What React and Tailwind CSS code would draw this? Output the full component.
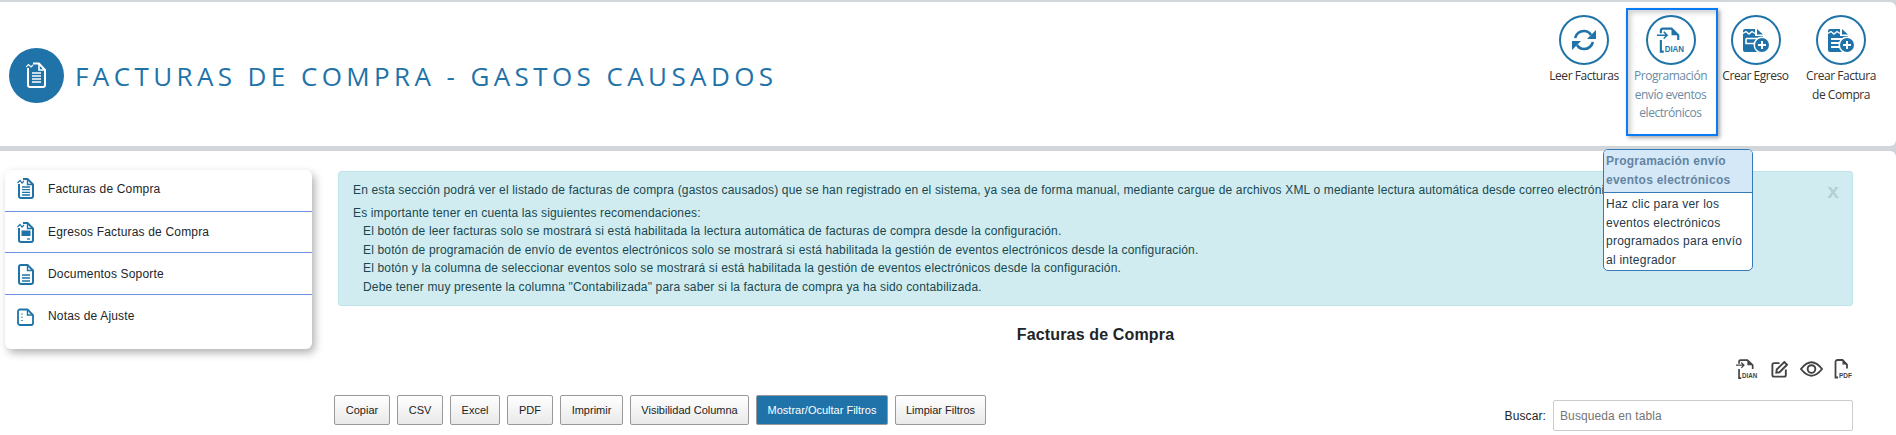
const BLUE = "#1f73a8";
const RefreshIcon = () => (
  <svg width="24" height="22" viewBox="0 0 24 22" fill="none">
    <path d="M3 9 C4.5 4.5 8 2 12 2 C15 2 17.5 3.5 19 6" stroke={BLUE} strokeWidth="2.6" />
    <path d="M24 1 V10 H15 Z" fill={BLUE} />
    <path d="M21 13 C19.5 17.5 16 20 12 20 C9 20 6.5 18.5 5 16" stroke={BLUE} strokeWidth="2.6" />
    <path d="M0 21 V12 H9 Z" fill={BLUE} />
  </svg>
);
const DianIcon = ({ color = BLUE, w = 28, h = 26 }) => (
  <svg width={w} height={h} viewBox="0 0 29 26" fill="none" className="overflow-visible">
    <path d="M4 6 V3 A2 2 0 0 1 6 1.2 H15 L22 8 V13" stroke={color} strokeWidth="2.2" />
    <path d="M15 1 L22 8 H15 Z" fill={color} />
    <path d="M0 8 H10 M7 4.5 L10.5 8 L7 11.5" stroke={color} strokeWidth="1.6" />
    <path d="M4 13 V25 H7" stroke={color} strokeWidth="2.2" />
    <text x="8" y="25" fontFamily="Liberation Sans, sans-serif" fontWeight="700" fontSize="10" fill={color} textLength="20" lengthAdjust="spacingAndGlyphs">DIAN</text>
  </svg>
);
const PdfIcon = () => (
  <svg width="19" height="20" viewBox="0 0 19 20" fill="none" className="overflow-visible">
    <path d="M1.5 11 V3 A2 2 0 0 1 3.5 1 H8.5 L13 5.5 V9.5" stroke="#444" strokeWidth="1.8" />
    <path d="M8.5 1 L13 5.5 H8.5 Z" fill="#444" />
    <path d="M1.5 11 V18.5 H4" stroke="#444" strokeWidth="1.8" />
    <text x="5" y="19" fontSize="7.5" fontWeight="700" fill="#444" fontFamily="Liberation Sans, sans-serif" textLength="13" lengthAdjust="spacingAndGlyphs">PDF</text>
  </svg>
);
const DocPlus = ({ lines }) => (
  <svg width="28" height="25" viewBox="0 0 28 25" fill="none">
    <path d="M1 3 A2 2 0 0 1 3 1 H13 V8 H21 V24 H3 A2 2 0 0 1 1 22 Z" fill={BLUE} />
    <path d="M15 1 L21 6.5 H15 Z" fill={BLUE} />
    <path d="M0 6 L4 3.5 L7 6 L10 3.5 L13 5.5" stroke="#fff" strokeWidth="1.4" />
    {lines ? (
      <path d="M4 11 H17 M4 15 H14 M4 19 H13" stroke="#fff" strokeWidth="1.8" />
    ) : (
      <path d="M4 10.5 H17 V11 M4 10.5 V15.5 H13" stroke="#fff" strokeWidth="1.6" />
    )}
    <circle cx="20" cy="17" r="8.5" fill="#fff" />
    <circle cx="20" cy="17" r="7" fill={BLUE} />
    <path d="M20 13 V21 M16 17 H24" stroke="#fff" strokeWidth="2" />
  </svg>
);
const HeaderAction = ({ icon, lines, active, width }) => (
  <div className={`flex flex-col items-center shrink-0 ${width} ${active ? "h-[128px] border-2 border-[#087bf5] shadow-[2px_2px_4px_rgba(0,0,0,0.35),inset_3px_3px_5px_rgba(0,0,0,0.18)] pt-[5px] pr-[3px] text-[#6b8ba3]" : "pt-[7px] text-[#333]"}`}>
    <div className="w-[50px] h-[50px] rounded-full border-[2.5px] border-[#1f73a8] bg-white flex items-center justify-center">{icon}</div>
    <div className="mt-[2px] text-center text-[12px] leading-[18.5px] font-['Open_Sans',sans-serif] tracking-[-0.45px]">
      {lines.map((l) => <div key={l} className="whitespace-nowrap">{l}</div>)}
    </div>
  </div>
);
const TitleDoc = () => (
  <svg width="21" height="26" viewBox="0 0 21 26" fill="none">
    <path d="M2 6 V23 A2 2 0 0 0 4 25 H17 A2 2 0 0 0 19 23 V8 L13 1.5 H7" stroke="#fff" strokeWidth="2" />
    <path d="M13 1.5 V8 H19" stroke="#fff" strokeWidth="1.6" />
    <path d="M0 5 L2.5 2.5 L5 5 L7 3" stroke="#fff" strokeWidth="1.2" />
    <path d="M6 11 H15 M6 14 H15 M6 17 H15 M6 20 H15" stroke="#fff" strokeWidth="1.5" />
  </svg>
);
const SideIcon = ({ kind }) => (
  <svg width="17" height="21" viewBox="0 0 17 21" fill="none">
    {kind === "nota" ? (
      <>
        <path d="M1 4.5 A2 2 0 0 1 3 2.5 H10.5 L16 8 V16 A2 2 0 0 1 14 18 H3 A2 2 0 0 1 1 16 Z" stroke={BLUE} strokeWidth="1.8" />
        <path d="M10.5 2.5 V8 H16" stroke={BLUE} strokeWidth="1.4" />
        <path d="M5 6.5 V7.5 M5 9.8 V10.8 M5 13 V14" stroke={BLUE} strokeWidth="1.5" />
      </>
    ) : (
      <>
        <path d={kind === "doc" ? "M2 3 A2 2 0 0 1 4 1 H10.5 L16 6.5 V18 A2 2 0 0 1 14 20 H4 A2 2 0 0 1 2 18 Z" : "M2 6 V18 A2 2 0 0 0 4 20 H14 A2 2 0 0 0 16 18 V6.5 L10.5 1 H6"} stroke={BLUE} strokeWidth="2" />
        <path d="M10.5 1 V6.5 H16" stroke={BLUE} strokeWidth="1.4" />
        {kind !== "doc" && <path d="M0.5 5 L3 2.5 L5 5 L7 3" stroke={BLUE} strokeWidth="1.2" />}
        {kind === "fact" && <path d="M5 9 H13 M5 11.7 H13 M5 14.4 H13 M5 17 H13" stroke={BLUE} strokeWidth="1.3" />}
        {kind === "egr" && <><rect x="4.5" y="8.5" width="9" height="5.5" fill={BLUE} /><path d="M10 17 H13" stroke={BLUE} strokeWidth="1.3" /></>}
        {kind === "doc" && <path d="M5 11 H13 M5 14 H13 M5 17 H13" stroke={BLUE} strokeWidth="1.4" />}
      </>
    )}
  </svg>
);
const menu = [
  ["fact", "Facturas de Compra", "pt-[8px]", "pt-[11px]", "h-[42px]"],
  ["egr", "Egresos Facturas de Compra", "pt-[10px]", "pt-[12px]", "h-[41px]"],
  ["doc", "Documentos Soporte", "pt-[11px]", "pt-[13px]", "h-[42px]"],
  ["nota", "Notas de Ajuste", "pt-[12px]", "pt-[13px]", ""],
];
const buttons = [
  ["Copiar", "w-[56px]"], ["CSV", "w-[46px]"], ["Excel", "w-[50px]"], ["PDF", "w-[46px]"],
  ["Imprimir", "w-[63px]"], ["Visibilidad Columna", "w-[119px]"], ["Mostrar/Ocultar Filtros", "w-[132px]"], ["Limpiar Filtros", "w-[91px]"],
];
const rules = [
  "El botón de leer facturas solo se mostrará si está habilitada la lectura automática de facturas de compra desde la configuración.",
  "El botón de programación de envío de eventos electrónicos solo se mostrará si está habilitada la gestión de eventos electrónicos desde la configuración.",
  "El botón y la columna de seleccionar eventos solo se mostrará si está habilitada la gestión de eventos electrónicos desde la configuración.",
  "Debe tener muy presente la columna \"Contabilizada\" para saber si la factura de compra ya ha sido contabilizada.",
];
export default function App() {
  return (
    <div className="w-[1896px] h-[435px] overflow-hidden bg-[#d2d5d9] pt-[2px] font-['Liberation_Sans',sans-serif] text-[#212529]">
      <header className="h-[144px] bg-white rounded-r-[6px] flex items-center pl-[9px] relative">
        <div className="w-[55px] h-[55px] rounded-full bg-[#1f73a8] flex items-center justify-center mt-[2px] shrink-0"><TitleDoc /></div>
        <h1 className="ml-[11px] mt-[5px] text-[#1f73a8] text-[26px] tracking-[4.4px] font-['Open_Sans',sans-serif] font-normal whitespace-nowrap">FACTURAS DE COMPRA - GASTOS CAUSADOS</h1>
        <div className="ml-auto self-start mt-[6px] mr-[7px] flex items-start">
          <HeaderAction icon={<RefreshIcon />} lines={["Leer Facturas"]} width="w-[84px]" />
          <HeaderAction active icon={<DianIcon />} lines={["Programación", "envío eventos", "electrónicos"]} width="w-[92px]" />
          <HeaderAction icon={<DocPlus />} lines={["Crear Egreso"]} width="w-[75px]" />
          <HeaderAction icon={<DocPlus lines />} lines={["Crear Factura", "de Compra"]} width="w-[96px]" />
        </div>
      </header>
      <main className="relative mt-[5px] h-[284px] bg-white rounded-tr-[6px] flex items-start">
        <nav className="ml-[5px] mt-[19px] w-[307px] h-[179px] bg-white rounded-[6px] shadow-[3px_4px_9px_rgba(0,0,0,0.3)] shrink-0">
          {menu.map(([k, t, ip, tp, h], i) => (
            <div key={t} className={`${h} flex items-start pl-[12px] ${i < 3 ? "border-b border-[#6d93e6]" : ""}`}>
              <div className={`w-[31px] ${ip} shrink-0`}><SideIcon kind={k} /></div>
              <span className={`${tp} text-[12px] leading-[16px] tracking-[0.17px]`}>{t}</span>
            </div>
          ))}
        </nav>
        <section className="ml-[26px] mt-[20px] w-[1515px] shrink-0">
          <div className="h-[135px] relative bg-[#d1ecf1] border border-[#bee5eb] rounded-[3px] pl-[14px] pt-[9px] text-[12px] leading-[18.5px] tracking-[0.155px] text-[#18484f] overflow-hidden">
            <p className="whitespace-nowrap">En esta sección podrá ver el listado de facturas de compra (gastos causados) que se han registrado en el sistema, ya sea de forma manual, mediante cargue de archivos XML o mediante lectura automática desde correo electrónico.</p>
            <p className="mt-[4px]">Es importante tener en cuenta las siguientes recomendaciones:</p>
            <div className="pl-[10px]">{rules.map((r) => <div key={r} className="whitespace-nowrap">{r}</div>)}</div>
            <span className="absolute right-[13px] top-[7px] text-[21px] leading-[24px] font-bold text-[#b5cfd4]">x</span>
          </div>
          <h2 className="mt-[19px] text-center text-[16px] leading-[20px] tracking-[0.15px] font-bold text-[#212529]">Facturas de Compra</h2>
          <div className="mt-[14px] h-[20px] flex justify-end items-center">
            <div className="flex items-center text-[#444]">
              <DianIcon color="#444" w={22} h={20} />
              <svg className="ml-[12px]" width="19" height="19" viewBox="0 0 24 24" fill="none" stroke="#444" strokeWidth="2.4"><path d="M12 4 H5 A2 2 0 0 0 3 6 V19 A2 2 0 0 0 5 21 H18 A2 2 0 0 0 20 19 V12" /><path d="M18 2.5 L21.5 6 L12 15.5 L8 16 L8.5 12 Z" /></svg>
              <svg className="ml-[11px]" width="23" height="16" viewBox="0 0 24 16" fill="none" stroke="#444" strokeWidth="2"><path d="M1 8 C5 3 9 1 12 1 C15 1 19 3 23 8 C19 13 15 15 12 15 C9 15 5 13 1 8 Z" /><circle cx="12" cy="8" r="4" /></svg>
              <span className="ml-[11px] flex"><PdfIcon /></span>
            </div>
          </div>
          <div className="mt-[17px] flex items-start">
            <div className="flex gap-[7px] -ml-[4px] mt-[-1px]">
              {buttons.map(([b, w], i) => (
                <button key={b} className={`${w} h-[30px] border border-[#999] rounded-[2px] text-[11px] ${i === 6 ? "bg-[#1f73a8] text-white" : "bg-gradient-to-b from-white to-[#e9e9e9] text-[#222]"}`}>{b}</button>
              ))}
            </div>
            <label className="ml-auto flex items-center text-[12px] tracking-[0.1px] mt-[4px]">
              <span>Buscar:</span>
              <input placeholder="Busqueda en tabla" className="ml-[7px] w-[300px] h-[31px] border border-[#ccc] rounded-[2px] px-[6px] text-[12px] placeholder:text-[#757575]" />
            </label>
          </div>
        </section>
        <div className="absolute left-[1603px] top-[-2px] w-[150px] h-[122px] bg-white border border-[#337ab7] rounded-[5px] overflow-hidden text-[12px] leading-[18.5px] tracking-[0.25px]">
          <div className="bg-[#d5e8f7] border-b border-[#337ab7] h-[43px] pl-[2px] pt-[2px] font-bold text-[#6384a3]">Programación envío<br />eventos electrónicos</div>
          <div className="pl-[2px] pt-[2px] text-[#24384a]">Haz clic para ver los<br />eventos electrónicos<br />programados para envío<br />al integrador</div>
        </div>
      </main>
    </div>
  );
}
